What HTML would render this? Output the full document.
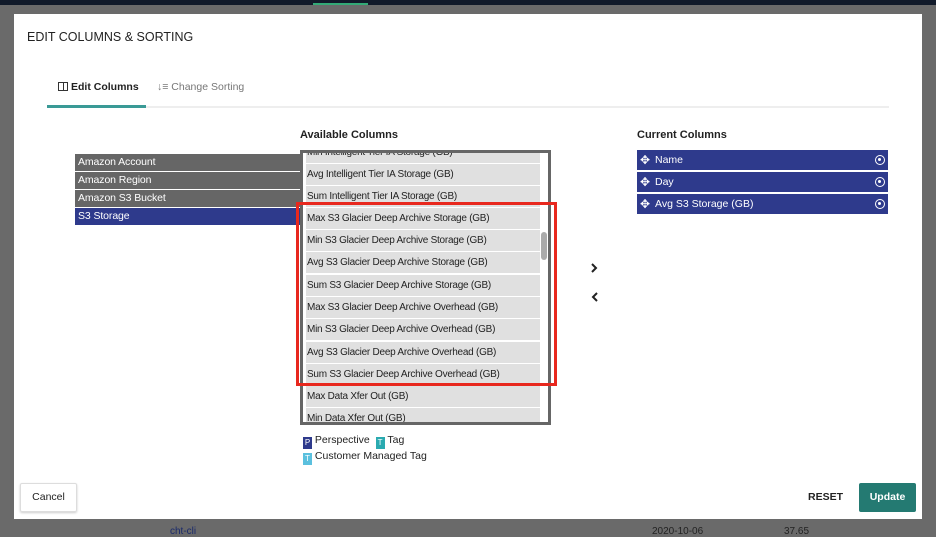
<!DOCTYPE html>
<html><head><style>
*{box-sizing:border-box;margin:0;padding:0}
body{width:936px;height:534px;background:#6a6a6a;font-family:"Liberation Sans",sans-serif;position:relative;overflow:hidden;font-size:11px;color:#222}
.a{position:absolute}
.modal{left:14px;top:14px;width:908px;height:505px;background:#fff}
.row{position:absolute;left:0;width:100%;color:#fff;padding-left:3px;line-height:17px;font-size:10.5px;letter-spacing:-0.1px}
.av{position:absolute;left:3px;width:234px;height:21px;background:#e0e0e0;line-height:21px;padding-left:1px;color:#222;font-size:10px;letter-spacing:-0.25px;white-space:nowrap}
.cc{position:absolute;left:0;width:251px;height:20px;background:#2e3a8c;color:#fff;line-height:20px;padding-left:18px;font-size:10.5px}
.cc .x{position:absolute;right:3px;top:5px;width:10px;height:10px;border-radius:50%;border:1.5px solid #fff}
.cc .x:after{content:"";position:absolute;left:2px;top:2px;width:3px;height:3px;background:#fff;border-radius:50%}
.mv{position:absolute;left:3px;top:0;font-size:12px}
.lg{display:inline-block;width:9px;height:12px;color:#fff;font-size:8px;text-align:center;line-height:12px;vertical-align:-2px}
</style></head><body>
<div class="a" style="left:0;top:0;width:936px;height:5px;background:#111a2a"></div>
<div class="a" style="left:313px;top:3px;width:55px;height:2px;background:#3a7"></div>
<div class="a" style="left:170px;top:526px;color:#1a2a6a;font-size:10px">cht-cli</div>
<div class="a" style="left:652px;top:526px;color:#222;font-size:10px">2020-10-06</div>
<div class="a" style="left:784px;top:526px;color:#222;font-size:10px">37.65</div>
<div class="a modal"></div>
<div class="a" style="left:27px;top:30px;font-size:12.5px;color:#222">EDIT COLUMNS &amp; SORTING</div>
<div class="a" style="left:58px;top:81px;font-size:10.5px;font-weight:bold;color:#222"><span style="display:inline-block;width:10px;height:9px;border:1px solid #333;vertical-align:-1px;margin-right:3px;background:linear-gradient(90deg,transparent 4px,#333 4px,#333 5px,transparent 5px)"></span>Edit Columns</div>
<div class="a" style="left:157px;top:81px;font-size:10.5px;color:#777">↓≡ Change Sorting</div>
<div class="a" style="left:47px;top:106px;width:842px;height:2px;background:#eee"></div>
<div class="a" style="left:47px;top:105px;width:99px;height:3px;background:#3a9a96"></div>
<div class="a" style="left:300px;top:129px;font-size:11px;font-weight:bold">Available Columns</div>
<div class="a" style="left:637px;top:129px;font-size:11px;font-weight:bold">Current Columns</div>
<div class="a" style="left:75px;top:154px;width:225px;height:72px">
<div class="row" style="top:0;background:#666">Amazon Account</div>
<div class="row" style="top:18px;background:#666">Amazon Region</div>
<div class="row" style="top:36px;background:#666">Amazon S3 Bucket</div>
<div class="row" style="top:54px;background:#2e3a8c">S3 Storage</div>
</div>
<div class="a" style="left:300px;top:150px;width:251px;height:275px;border:3px solid #666;background:#fff;overflow:hidden">
<div class="av" style="top:-11px">Min Intelligent Tier IA Storage (GB)</div>
<div class="av" style="top:11px">Avg Intelligent Tier IA Storage (GB)</div>
<div class="av" style="top:33px">Sum Intelligent Tier IA Storage (GB)</div>
<div class="av" style="top:55px">Max S3 Glacier Deep Archive Storage (GB)</div>
<div class="av" style="top:77px">Min S3 Glacier Deep Archive Storage (GB)</div>
<div class="av" style="top:99px">Avg S3 Glacier Deep Archive Storage (GB)</div>
<div class="av" style="top:122px">Sum S3 Glacier Deep Archive Storage (GB)</div>
<div class="av" style="top:144px">Max S3 Glacier Deep Archive Overhead (GB)</div>
<div class="av" style="top:166px">Min S3 Glacier Deep Archive Overhead (GB)</div>
<div class="av" style="top:189px">Avg S3 Glacier Deep Archive Overhead (GB)</div>
<div class="av" style="top:211px">Sum S3 Glacier Deep Archive Overhead (GB)</div>
<div class="av" style="top:233px">Max Data Xfer Out (GB)</div>
<div class="av" style="top:255px">Min Data Xfer Out (GB)</div>
<div class="a" style="left:238px;top:79px;width:6px;height:28px;border-radius:3px;background:#aaa"></div>
</div>
<div class="a" style="left:296px;top:202px;width:261px;height:184px;border:3px solid #e8281e"></div>
<svg class="a" style="left:590px;top:263px" width="10" height="40"><path d="M2 1 L6 5 L2 9 M7 30 L3 34 L7 38" stroke="#222" stroke-width="2" fill="none"/></svg>
<div class="a" style="left:637px;top:150px;width:251px">
<div class="cc" style="top:0"><span class="mv">✥</span>Name<span class="x"></span></div>
<div class="cc" style="top:22px"><span class="mv">✥</span>Day<span class="x"></span></div>
<div class="cc" style="top:44px"><span class="mv">✥</span>Avg S3 Storage (GB)<span class="x"></span></div>
</div>
<div class="a" style="left:303px;top:433px;font-size:10.5px;line-height:15px">
<div><span class="lg" style="background:#2e3a8c">P</span> Perspective &nbsp;<span class="lg" style="background:#2aaab0">T</span> Tag</div>
<div><span class="lg" style="background:#5bc0de">T</span> Customer Managed Tag</div>
</div>
<div class="a" style="left:20px;top:483px;width:57px;height:29px;border:1px solid #ddd;border-radius:2px;font-size:10.5px;line-height:27px;text-align:center;box-shadow:0 1px 2px rgba(0,0,0,.2)">Cancel</div>
<div class="a" style="left:808px;top:491px;font-size:10.5px;font-weight:bold">RESET</div>
<div class="a" style="left:859px;top:483px;width:57px;height:29px;background:#247a72;color:#fff;font-size:10.5px;font-weight:bold;line-height:29px;text-align:center;border-radius:2px">Update</div>
</body></html>
